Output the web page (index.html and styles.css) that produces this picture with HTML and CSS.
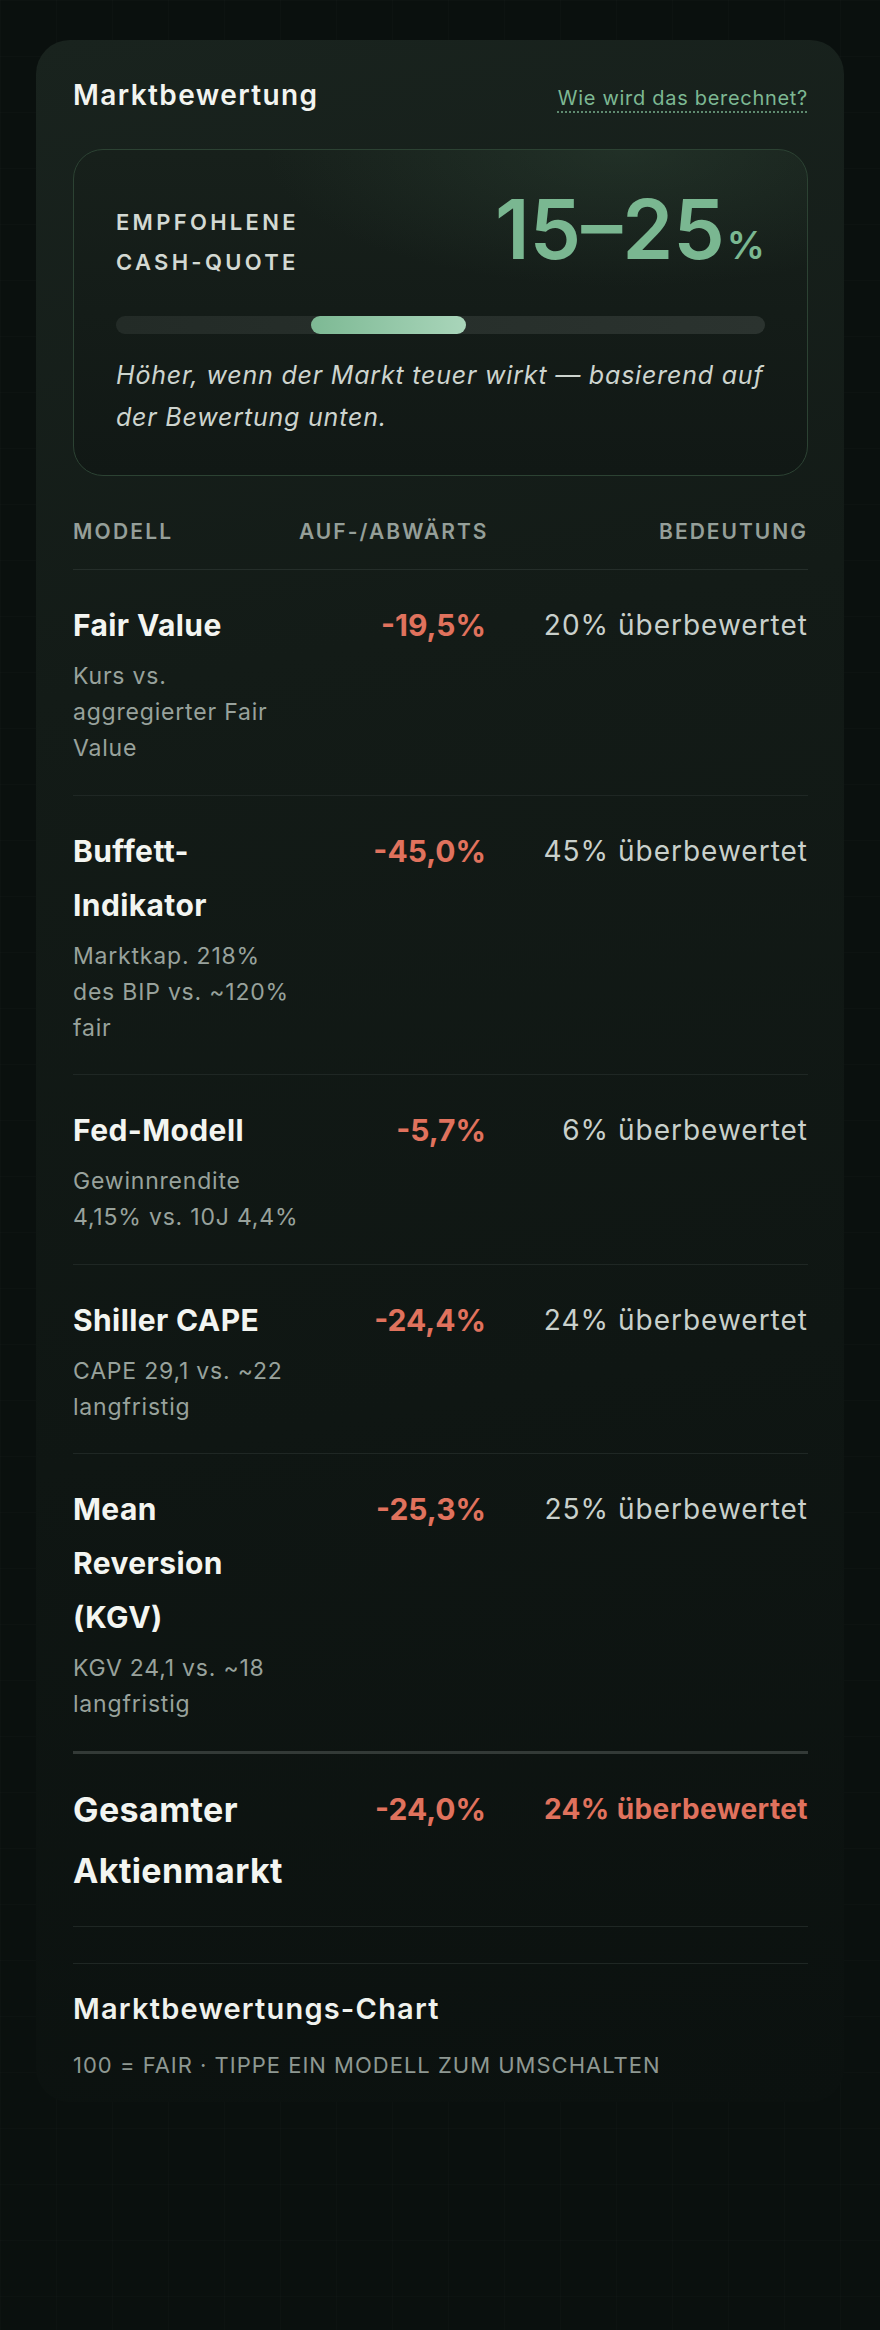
FILE: index.html
```html
<!DOCTYPE html>
<html lang="de">
<head>
<meta charset="utf-8">
<title>Marktbewertung</title>
<link rel="stylesheet" href="styles.css">
</head>
<body>
<main class="card">
  <header class="card-head">
    <h1 class="card-title">Marktbewertung</h1>
    <a class="help-link" href="#">Wie wird das berechnet?</a>
  </header>

  <section class="hero">
    <div class="hero-top">
      <div class="hero-label">EMPFOHLENE<br>CASH-QUOTE</div>
      <div class="hero-value">15–25<span class="hero-pct">%</span></div>
    </div>
    <div class="track"><div class="track-fill" style="margin-left:30%;width:24%"></div></div>
    <p class="hero-note">Höher, wenn der Markt teuer wirkt — basierend auf der Bewertung unten.</p>
  </section>

  <div class="table">
    <div class="row row-head">
      <div>MODELL</div>
      <div class="num">AUF-/ABWÄRTS</div>
      <div class="num">BEDEUTUNG</div>
    </div>

    <div class="row">
      <div>
        <div class="name">Fair Value</div>
        <div class="desc">Kurs vs. aggregierter Fair Value</div>
      </div>
      <div class="num val">-19,5%</div>
      <div class="num mean">20% überbewertet</div>
    </div>

    <div class="row">
      <div>
        <div class="name">Buffett-Indikator</div>
        <div class="desc">Marktkap. 218% des BIP vs. ~120% fair</div>
      </div>
      <div class="num val">-45,0%</div>
      <div class="num mean">45% überbewertet</div>
    </div>

    <div class="row">
      <div>
        <div class="name">Fed-Modell</div>
        <div class="desc">Gewinnrendite 4,15% vs. 10J 4,4%</div>
      </div>
      <div class="num val">-5,7%</div>
      <div class="num mean">6% überbewertet</div>
    </div>

    <div class="row">
      <div>
        <div class="name">Shiller CAPE</div>
        <div class="desc">CAPE 29,1 vs. ~22 langfristig</div>
      </div>
      <div class="num val">-24,4%</div>
      <div class="num mean">24% überbewertet</div>
    </div>

    <div class="row row-last">
      <div>
        <div class="name">Mean Reversion (KGV)</div>
        <div class="desc">KGV 24,1 vs. ~18 langfristig</div>
      </div>
      <div class="num val">-25,3%</div>
      <div class="num mean">25% überbewertet</div>
    </div>

    <div class="row row-total">
      <div>
        <div class="name">Gesamter Aktienmarkt</div>
      </div>
      <div class="num val">-24,0%</div>
      <div class="num mean hot">24% überbewertet</div>
    </div>
  </div>

  <section class="chart">
    <h2 class="chart-title">Marktbewertungs-Chart</h2>
    <p class="chart-sub">100 = FAIR · TIPPE EIN MODELL ZUM UMSCHALTEN</p>
  </section>
</main>
</body>
</html>
```

FILE: styles.css
```css
* { box-sizing: border-box; }

html, body {
  margin: 0;
  padding: 0;
}

body {
  min-height: 2330px;
  background-color: #0a100e;
  background-image:
    linear-gradient(rgba(255,255,255,0.012) 1px, transparent 1px),
    linear-gradient(90deg, rgba(255,255,255,0.012) 1px, transparent 1px);
  background-size: 56px 56px;
  font-family: Inter, "Noto Sans", sans-serif;
  color: #eef1ed;
  padding: 40px 36px 0 36px;
}

.card {
  border-radius: 34px;
  background: linear-gradient(170deg, #19231e 0%, #131b17 30%, #0f1613 65%, #0b110f 100%);
  padding: 38px 36px 24px 37px;
  min-height: 2062px;
}

.card-head {
  display: flex;
  justify-content: space-between;
  align-items: baseline;
}

.card-title {
  margin: 0;
  font-size: 28px;
  line-height: 34px;
  font-weight: 600;
  letter-spacing: 1.4px;
  color: #f2f4f0;
}

.help-link {
  font-size: 20px;
  letter-spacing: 0.7px;
  color: #7db893;
  text-decoration: underline dotted rgba(125,184,147,0.7);
  text-decoration-thickness: 2px;
  text-underline-offset: 6px;
}

.hero {
  margin-top: 37px;
  border: 1.5px solid #2c4233;
  border-radius: 30px;
  padding: 40px 42px 37px 42px;
  background:
    radial-gradient(ellipse 70% 60% at 75% 0%, rgba(60,90,70,0.28), transparent 70%),
    linear-gradient(180deg, #17201b 0%, #111815 100%);
}

.hero-top {
  display: flex;
  justify-content: space-between;
  align-items: flex-start;
}

.hero-label {
  margin-top: 12px;
  font-size: 22px;
  line-height: 40px;
  font-weight: 600;
  letter-spacing: 3.3px;
  color: #d3d9d3;
}

.hero-value {
  font-size: 82px;
  line-height: 80px;
  font-weight: 600;
  letter-spacing: 0;
  color: #7ab791;
}

.hero-pct {
  font-size: 38px;
  margin-left: 2px;
}

.track {
  margin-top: 31px;
  height: 18px;
  border-radius: 9px;
  background: linear-gradient(90deg, #232b27, #2b332f);
  display: flex;
}

.track-fill {
  height: 18px;
  border-radius: 9px;
  background: linear-gradient(90deg, #7db994, #a9d5ba);
}

.hero-note {
  margin: 20px 0 0 0;
  font-size: 25px;
  line-height: 42px;
  font-style: italic;
  letter-spacing: 0.8px;
  color: #cdd4ce;
}

.table {
  margin-top: 43px;
}

.row {
  display: grid;
  grid-template-columns: 226px 187px 1fr;
  border-bottom: 1.5px solid #1f2724;
  padding: 28px 0 28.5px 0;
}

.row-head {
  padding: 0 0 25px 0;
  border-bottom-color: #252e2a;
  font-size: 21px;
  line-height: 25px;
  font-weight: 600;
  letter-spacing: 2.2px;
  color: #959f99;
}

.row-head .num { letter-spacing: 2px; }

.num {
  text-align: right;
}

.name {
  font-size: 30px;
  line-height: 54px;
  font-weight: 700;
  letter-spacing: 0.4px;
  color: #f3f5f1;
}

.desc {
  margin-top: 6px;
  font-size: 23px;
  line-height: 36px;
  letter-spacing: 0.8px;
  color: #98a29c;
}

.val {
  font-size: 30px;
  line-height: 54px;
  font-weight: 700;
  color: #e0725d;
}

.mean {
  font-size: 28px;
  line-height: 54px;
  letter-spacing: 1px;
  color: #c9d0cb;
}

.row-last {
  border-bottom: 3px solid #333a37;
}

.row-total {
  padding: 25px 0 25px 0;
}

.row-total .name {
  font-size: 34px;
  line-height: 61px;
}

.row-total .val,
.row-total .mean {
  line-height: 61px;
}

.mean.hot {
  font-weight: 700;
  letter-spacing: 0.4px;
  color: #e0725d;
}

.chart {
  margin-top: 36px;
  border-top: 1.5px solid #1f2724;
  padding-top: 27px;
}

.chart-title {
  margin: 0;
  font-size: 29px;
  line-height: 36px;
  font-weight: 600;
  letter-spacing: 1.2px;
  color: #f0f2ee;
}

.chart-sub {
  margin: 25px 0 0 0;
  font-size: 22px;
  line-height: 26px;
  letter-spacing: 1px;
  color: #8e9892;
}
```
